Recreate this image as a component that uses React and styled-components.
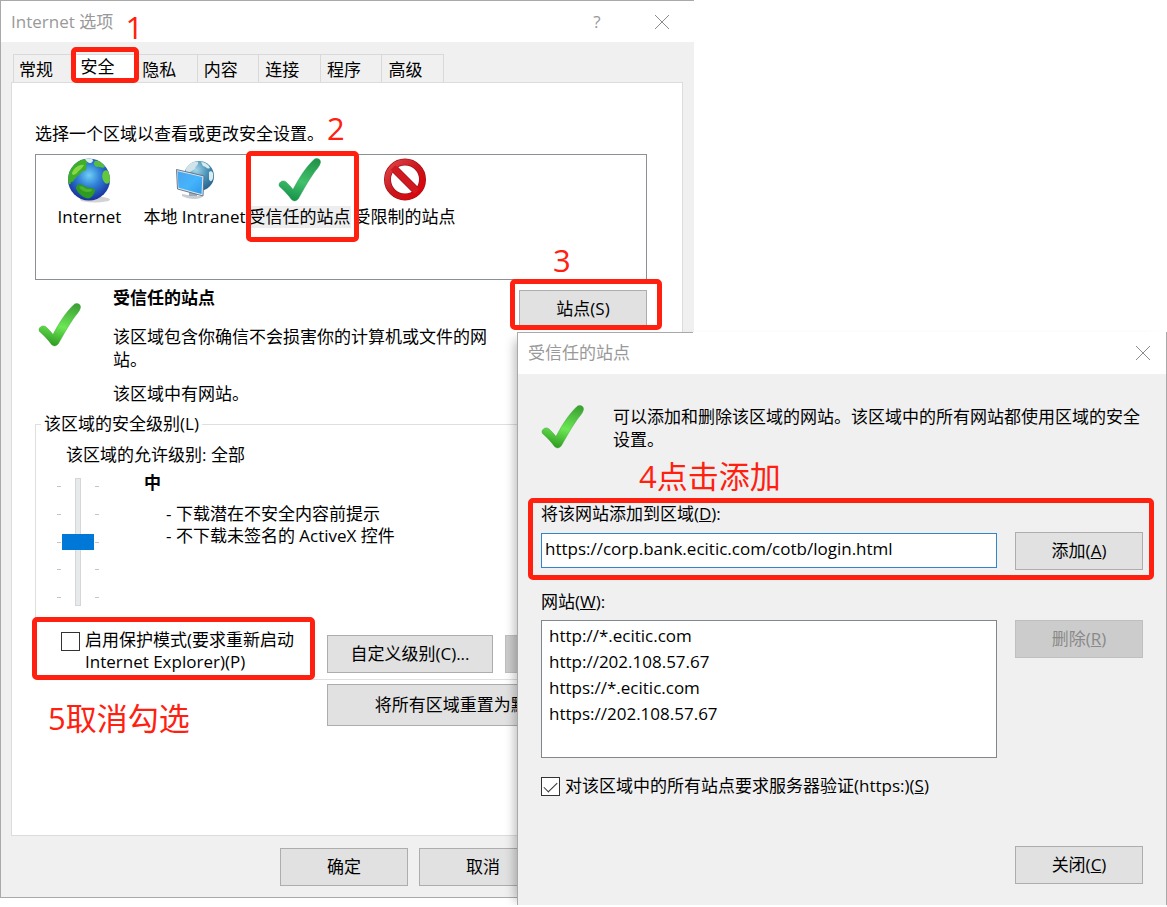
import { useState } from 'react';
import styled, { createGlobalStyle, css } from 'styled-components';

const GlobalStyle = createGlobalStyle`
    * {
        box-sizing: border-box;
    }
    body {
        margin: 0;
        background: #fff;
        color: #000;
        font: 17px/22px "Open Sans", "Noto Sans CJK SC", sans-serif;
    }
    button, input, select {
        font: inherit;
        color: inherit;
        margin: 0;
    }
    p, h2, h3, ul {
        margin: 0;
        padding: 0;
        font: inherit;
    }
`;

/* the two windows share the middle column, the dialog lies on top */
const Desktop = styled.main`
    display: grid;
    grid-template-columns: 517fr 177fr 473fr;
    grid-template-rows: 332px auto;
    align-items: start;
`;

const OptionsWindow = styled.section`
    grid-column: 1 / 3;
    grid-row: 1 / 3;
    background: #f0f0f0;
    border: solid #a9a9a9;
    border-width: 1px 0 1px 1px;
`;

const SitesDialog = styled.section`
    grid-column: 2 / 4;
    grid-row: 2;
    position: relative;
    background: #f0f0f0;
    border: solid #a9a9a9;
    border-width: 0 1px 0 1px;
    box-shadow: -8px 2px 10px -6px rgba(0, 0, 0, 0.28);
`;

const TitleBar = styled.header`
    display: flex;
    align-items: center;
    height: ${props => props.$height}px;
    padding: 0 ${props => props.$end}px 0 10px;
    color: #999;
    background: #fff;
    ${props => props.$edge && css`
        background: linear-gradient(#a9a9a9, #a9a9a9) 0 0 / 27% 1px no-repeat #fff;
    `}
`;

const Title = styled.h2`
    flex: 1;
`;

const CaptionButton = styled.button`
    display: flex;
    align-items: center;
    justify-content: center;
    width: 32px;
    height: 32px;
    margin-left: ${props => props.$gap || 0}px;
    padding: 0;
    border: 0;
    background: none;
`;

const Tabs = styled.div`
    display: flex;
    width: 431px;
    margin: 12px 0 0 12px;
`;

const TabSlot = styled.div`
    position: relative;
    flex: 1;
`;

const Tab = styled.button`
    display: block;
    width: 100%;
    height: 28px;
    padding: 2px 0 0 6px;
    text-align: left;
    background: #f0f0f0;
    border: solid #d9d9d9;
    border-width: 1px 1px 0 0;

    ${TabSlot}:first-child & {
        border-left-width: 1px;
        padding-left: 5px;
    }
    &[aria-selected="true"] {
        position: relative;
        height: 29px;
        padding: 0 0 4px 6px;
        margin-bottom: -1px;
        background: #fff;
    }
`;

const Panel = styled.div`
    margin: 0 11px 0 10px;
    padding: 40px 35px 109px 23px;
    background: #fff;
    border: 1px solid #dcdcdc;
`;

const Anchor = styled.div`
    position: relative;
`;

/* red frame drawn round its parent */
const Frame = styled.span`
    position: absolute;
    z-index: 2;
    inset: ${props => props.$inset};
    border: 5px solid #ff2010;
    border-radius: 5px;
    pointer-events: none;
`;

const Note = styled.span`
    position: absolute;
    z-index: 2;
    left: ${props => props.$left}px;
    top: ${props => props.$top}px;
    color: #ff2010;
    font-size: 31px;
    line-height: 40px;
    white-space: nowrap;
    pointer-events: none;
`;

const ZoneList = styled.div`
    display: flex;
    height: 126px;
    margin-top: 9px;
    padding: 0 1px;
    border: 1px solid #8b9097;
`;

const Zone = styled.button`
    position: relative;
    display: flex;
    flex-direction: column;
    align-items: center;
    width: 105px;
    height: 80px;
    padding: 3px 0 0;
    gap: 2px;
    border: 0;
    background: none;
    white-space: nowrap;
`;

const ZoneLabel = styled.span`
    background: ${props => (props.$selected ? '#eee' : 'none')};
`;

const Details = styled.div`
    display: flex;
    margin-top: 7px;
`;

const DetailsIcon = styled.div`
    padding: 16px 0 0 3px;
    width: 78px;
`;

const DetailsText = styled.div`
    flex: 1;
    padding-right: 20px;
    line-height: 23px;
`;

const DetailsTitle = styled.h3`
    font-weight: 700;
    line-height: 22px;
    margin-bottom: 16px;
`;

const DetailsNote = styled.p`
    margin-top: 11px;
`;

const PushButton = styled.button`
    width: ${props => props.$width || '128px'};
    height: ${props => (props.$tall ? 42 : 38)}px;
    padding: 0;
    background: #e1e1e1;
    border: 1px solid #adadad;
    white-space: nowrap;

    &:disabled {
        color: #8a8a8a;
        background: #ccc;
        border-color: #bfbfbf;
    }
`;

const SitesAnchor = styled(Anchor)`
    height: 38px;
    margin-top: 3px;
`;

const LevelGroup = styled.fieldset`
    min-width: 0;
    margin: 8px 0 0;
    padding: 9px 11px 6px 21px;
    border: 1px solid #dfdfdf;

    legend {
        margin-left: -16px;
        padding: 0 3px;
    }
`;

const Allowed = styled.p`
    padding-left: 9px;
`;

const LevelRow = styled.div`
    display: flex;
    margin-top: 6px;
`;

const SliderBox = styled.div`
    display: flex;
    gap: 1px;
    padding-top: 6px;
`;

const Ticks = styled.div`
    display: flex;
    flex-direction: column;
    justify-content: space-between;
    width: 4px;
    height: 128px;
    padding: 8px 0;

    i {
        height: 1px;
        background: #c4c4c4;
    }
`;

const Slider = styled.input`
    appearance: none;
    writing-mode: vertical-lr;
    direction: rtl;
    width: 32px;
    height: 128px;
    background: none;

    &::-webkit-slider-runnable-track {
        width: 6px;
        height: 128px;
        background: #e7eaea;
        border: 1px solid #d6d6d6;
    }
    &::-webkit-slider-thumb {
        appearance: none;
        width: 32px;
        height: 16px;
        margin-left: -14px;
        background: #0078d7;
    }
`;

const LevelText = styled.div`
    padding-left: 45px;
`;

const LevelName = styled.h3`
    font-weight: 700;
    margin-bottom: 9px;
`;

const LevelList = styled.ul`
    padding-left: 22px;
    list-style: none;
`;

const LevelControls = styled.div`
    display: grid;
    grid-template-columns: 254px 166px 1fr;
    column-gap: 12px;
    align-items: end;
    margin-top: 23px;
    margin-left: 4px;
`;

const CheckLabel = styled.label`
    display: flex;
    align-items: flex-start;
    gap: 5px;
    max-width: 100%;
`;

const CheckText = styled.span`
    max-width: ${props => props.$width || 'none'};
`;

const CheckBox = styled.input`
    appearance: none;
    flex: none;
    display: grid;
    place-items: start center;
    width: 19px;
    height: 19px;
    margin-top: ${props => props.$drop || 0}px;
    background: #fff;
    border: 1px solid #333;

    &:checked::after {
        content: "";
        width: 12px;
        height: 6px;
        margin-top: 4px;
        border: solid #333;
        border-width: 0 0 1px 1px;
        transform: rotate(-45deg);
    }
`;

const ResetRow = styled.div`
    position: relative;
    display: flex;
    justify-content: flex-end;
    margin-top: 4px;
`;

const Footer = styled.footer`
    display: flex;
    justify-content: flex-end;
    gap: 11px;
    padding: 12px 8px 11px;
`;

const DialogBody = styled.div`
    padding: 31px 23px 21px;
`;

const Intro = styled.div`
    position: relative;
    display: flex;
    gap: 28px;
    line-height: 23px;

    p {
        flex: 1;
    }
    svg {
        flex: none;
    }
`;

const FieldBlock = styled.div`
    position: relative;
    display: grid;
    grid-template-columns: 1fr 128px;
    column-gap: 18px;
    row-gap: 7px;
    align-items: start;
    margin-top: ${props => props.$top}px;

    label {
        grid-column: 1 / 3;
    }
`;

const UrlInput = styled.input`
    width: 100%;
    min-width: 0;
    height: 35px;
    margin-top: 1px;
    padding: 0 3px 5px;
    background: #fff;
    border: 1px solid #2f86cc;
    border-radius: 0;
    outline: 0;
`;

const SiteList = styled.select`
    width: 100%;
    height: 138px;
    padding: 2px 0;
    background: #fff;
    border: 1px solid #82878f;
    border-radius: 0;
    overflow: hidden;
    outline: 0;

    option {
        min-height: 26px;
        padding: 1px 7px 2px;
        line-height: 22px;
    }
`;

const VerifyRow = styled(CheckLabel)`
    margin-top: 17px;
`;

const DialogFooter = styled.div`
    display: flex;
    justify-content: flex-end;
    margin-top: 49px;
`;

const CloseIcon = () => (
    <svg width="16" height="16" viewBox="0 0 16 16" fill="none" stroke="#8c8c8c">
        <path d="M1 1l14 14M15 1L1 15" />
    </svg>
);

const CheckIcon = ({ id, from, mid, to }) => (
    <svg width="44" height="46" viewBox="0 0 44 46">
        <defs>
            <linearGradient id={id} x1="0.7" y1="0" x2="0.4" y2="1">
                <stop offset="0" stopColor={from} />
                <stop offset="0.55" stopColor={mid} />
                <stop offset="1" stopColor={to} />
            </linearGradient>
        </defs>
        <path
            d="M1.5 28.5C-.5 25 4 21.500 7.500 23.500C10.500 26 13 29 15 31.500C21 20 28 9 36 1.500C38 -.5 43 .5 42.500 4.500C41.500 9 38.500 11 35.500 15.500C29.500 24 24.500 33.500 20.500 40.500C18.500 43.500 15.500 43.500 13.500 41.500C10 36.500 6 32.500 1.500 28.500Z"
            fill={`url(#${id})`}
            stroke={to}
            strokeOpacity="0.5"
            strokeWidth="0.8"
        />
    </svg>
);

const GlobeIcon = () => (
    <svg width="44" height="46" viewBox="0 0 44 46">
        <defs>
            <radialGradient id="ocean" cx="0.5" cy="0.4" r="0.6">
                <stop offset="0" stopColor="#6fd0f5" />
                <stop offset="0.45" stopColor="#2f7fd6" />
                <stop offset="1" stopColor="#17309c" />
            </radialGradient>
            <clipPath id="globeClip"><circle cx="21" cy="21.5" r="21" /></clipPath>
        </defs>
        <ellipse cx="27" cy="41.500" rx="15" ry="3" fill="#b5b5b5" opacity="0.6" />
        <circle cx="21" cy="21.5" r="21" fill="url(#ocean)" />
        <g clipPath="url(#globeClip)">
            <path d="M0 24C-1 12 6 4 15 1C21 2 19 5 18 8C20 11 17 14 14 13C13 17 9 17 8 20C5 22 6 24 3 24C3 27 1 27 0 24Z" fill="#3fae2b" />
            <path d="M4 15C6 10 11 6 16 7C14 11 11 12 9 15C7 17 4 18 4 15Z" fill="#86d848" />
            <path d="M9 27C12 25 16 27 18 29C23 30 28 30 27 33C26 37 22 42 18 40C13 38 9 34 8 30Z" fill="#2f9a22" />
            <path d="M11 29C14 27 16 30 19 31C22 31 25 31 24 33C20 35 14 34 11 29Z" fill="#4fb32f" />
            <path d="M36 13C39 11 42 13 43 20C42 24 40 27 37 25C34 22 33 17 36 13Z" fill="#63c83c" />
            <path d="M27 3C31 2 35 5 37 9C34 11 32 8 29 9C26 8 25 5 27 3Z" fill="#57bd3a" />
            <path d="M17 1C20 -1 25 0 25 3C23 6 20 6 17 1Z" fill="#dff0e6" />
        </g>
    </svg>
);

const IntranetIcon = () => (
    <svg width="44" height="46" viewBox="0 0 44 46">
        <defs>
            <radialGradient id="sea" cx="0.4" cy="0.3" r="0.75">
                <stop offset="0" stopColor="#a5d5e8" />
                <stop offset="0.5" stopColor="#4a93b8" />
                <stop offset="1" stopColor="#235f8b" />
            </radialGradient>
            <linearGradient id="screen" x1="0" y1="0" x2="1" y2="1">
                <stop offset="0" stopColor="#4aa5f0" />
                <stop offset="0.55" stopColor="#45b4fb" />
                <stop offset="1" stopColor="#2f98ea" />
            </linearGradient>
        </defs>
        <circle cx="26" cy="18" r="15" fill="url(#sea)" />
        <path d="M13 11C16 5 21 3 25 4C26 7 22 8 22 11C18 13 15 16 12 16Z" fill="#cfe3e8" />
        <path d="M28 4C32 4 36 7 37 10C34 12 33 8 30 8ZM36 14C39 12 41 15 40 20C39 24 37 24 36 21Z" fill="#dcebee" />
        <path d="M9 36L20 38L30 38C28 42 16 42 9 38Z" fill="#c5ced5" />
        <path d="M16 33h8v5h-8z" fill="#9fabb5" />
        <path d="M3.500 11.500L31 18L30 38L4.500 31Z" fill="#dde6ee" stroke="#5c6d7e" strokeWidth="0.9" />
        <path d="M4.500 13.200L29.300 19L28.500 36L5.500 29.800Z" fill="url(#screen)" />
    </svg>
);

const BlockedIcon = () => (
    <svg width="44" height="46" viewBox="0 0 44 46">
        <defs>
            <linearGradient id="stop" x1="0" y1="0" x2="1" y2="1">
                <stop offset="0" stopColor="#e0454a" />
                <stop offset="0.5" stopColor="#c9161c" />
                <stop offset="1" stopColor="#e00008" />
            </linearGradient>
        </defs>
        <g fill="none">
            <circle cx="22" cy="21.500" r="17.500" stroke="#a01116" strokeWidth="7" />
            <path d="M10 9.500L34 33.500" stroke="#a01116" strokeWidth="8" />
            <circle cx="22" cy="21.500" r="17.500" stroke="url(#stop)" strokeWidth="5.500" />
            <path d="M10 9.500L34 33.500" stroke="#d01a20" strokeWidth="6.500" />
        </g>
    </svg>
);

const BrightCheck = ({ id }) => <CheckIcon id={id} from="#3da435" mid="#6be854" to="#2f9c22" />;

const tabNames = ['常规', '安全', '隐私', '内容', '连接', '程序', '高级'];

const zones = [
    { name: 'Internet', icon: <GlobeIcon /> },
    { name: '本地 Intranet', icon: <IntranetIcon /> },
    { name: '受信任的站点', icon: <CheckIcon id="zoneCheck" from="#22954a" mid="#43c06c" to="#17934a" />, marked: true },
    { name: '受限制的站点', icon: <BlockedIcon /> },
];

const sites = [
    'http://*.ecitic.com',
    'http://202.108.57.67',
    'https://*.ecitic.com',
    'https://202.108.57.67',
];

const TickColumn = () => (
    <Ticks><i /><i /><i /><i /><i /></Ticks>
);

const InternetOptions = () => {
    const [level, setLevel] = useState(2);
    const [isProtected, setProtected] = useState(false);

    return (
        <OptionsWindow>
            <TitleBar $height={41} $end={16}>
                <Title>Internet 选项</Title>
                <CaptionButton aria-label="帮助">?</CaptionButton>
                <CaptionButton $gap={33} aria-label="关闭"><CloseIcon /></CaptionButton>
            </TitleBar>
            <Tabs role="tablist">
                {tabNames.map(name => (
                    <TabSlot key={name}>
                        <Tab role="tab" aria-selected={name === '安全'}>{name}</Tab>
                        {name === '安全' && (
                            <>
                                <Frame $inset="-7px -3px -1px -4px" />
                                <Note $left={51} $top={-47}>1</Note>
                            </>
                        )}
                    </TabSlot>
                ))}
            </Tabs>
            <Panel>
                <Anchor>
                    <p>选择一个区域以查看或更改安全设置。</p>
                    <Note $left={292} $top={-15}>2</Note>
                </Anchor>
                <ZoneList>
                    {zones.map(zone => (
                        <Zone key={zone.name}>
                            {zone.icon}
                            <ZoneLabel $selected={zone.marked}>{zone.name}</ZoneLabel>
                            {zone.marked && <Frame $inset="-4px -7px -7px -1px" />}
                        </Zone>
                    ))}
                </ZoneList>
                <Details>
                    <DetailsIcon><BrightCheck id="detailCheck" /></DetailsIcon>
                    <DetailsText>
                        <DetailsTitle>受信任的站点</DetailsTitle>
                        <p>该区域包含你确信不会损害你的计算机或文件的网站。</p>
                        <DetailsNote>该区域中有网站。</DetailsNote>
                    </DetailsText>
                    <SitesAnchor>
                        <PushButton>站点(S)</PushButton>
                        <Frame $inset="-11px -15px -2px -9px" />
                        <Note $left={34} $top={-50}>3</Note>
                    </SitesAnchor>
                </Details>
                <LevelGroup>
                    <legend>该区域的安全级别(L)</legend>
                    <Allowed>该区域的允许级别: 全部</Allowed>
                    <LevelRow>
                        <SliderBox>
                            <TickColumn />
                            <Slider
                                type="range"
                                min="0"
                                max="4"
                                value={level}
                                aria-label="该区域的安全级别"
                                onChange={e => setLevel(Number(e.target.value))}
                            />
                            <TickColumn />
                        </SliderBox>
                        <LevelText>
                            <LevelName>中</LevelName>
                            <LevelList>
                                <li>- 下载潜在不安全内容前提示</li>
                                <li>- 不下载未签名的 ActiveX 控件</li>
                            </LevelList>
                        </LevelText>
                    </LevelRow>
                    <LevelControls>
                        <Anchor>
                            <CheckLabel>
                                <CheckBox
                                    type="checkbox"
                                    $drop={3}
                                    checked={isProtected}
                                    onChange={e => setProtected(e.target.checked)}
                                />
                                <CheckText $width="220px">启用保护模式(要求重新启动 Internet Explorer)(P)</CheckText>
                            </CheckLabel>
                            <Frame $inset="-12px 0 -7px -29px" />
                        </Anchor>
                        <PushButton $width="100%">自定义级别(C)...</PushButton>
                        <PushButton $width="100%" disabled>默认级别(D)</PushButton>
                    </LevelControls>
                </LevelGroup>
                <ResetRow>
                    <Note $left={13} $top={14}>5取消勾选</Note>
                    <PushButton $width="320px" $tall>将所有区域重置为默认级别(R)</PushButton>
                </ResetRow>
            </Panel>
            <Footer>
                <PushButton>确定</PushButton>
                <PushButton>取消</PushButton>
                <PushButton disabled>应用(A)</PushButton>
            </Footer>
        </OptionsWindow>
    );
};

const TrustedSites = () => {
    const [url, setUrl] = useState('https://corp.bank.ecitic.com/cotb/login.html');
    const [verify, setVerify] = useState(true);

    return (
        <SitesDialog>
            <TitleBar $height={42} $end={7} $edge>
                <Title>受信任的站点</Title>
                <CaptionButton aria-label="关闭"><CloseIcon /></CaptionButton>
            </TitleBar>
            <DialogBody>
                <Intro>
                    <BrightCheck id="dialogCheck" />
                    <p>可以添加和删除该区域的网站。该区域中的所有网站都使用区域的安全设置。</p>
                    <Note $left={98} $top={51}>4点击添加</Note>
                </Intro>
                <FieldBlock $top={52}>
                    <label htmlFor="site-url">将该网站添加到区域(<u>D</u>):</label>
                    <UrlInput id="site-url" type="text" value={url} onChange={e => setUrl(e.target.value)} />
                    <PushButton>添加(<u>A</u>)</PushButton>
                    <Frame $inset="-5px -11px -10px -13px" />
                </FieldBlock>
                <FieldBlock $top={21}>
                    <label htmlFor="site-list">网站(<u>W</u>):</label>
                    <SiteList id="site-list" multiple size="5">
                        {sites.map(site => <option key={site}>{site}</option>)}
                    </SiteList>
                    <PushButton disabled>删除(<u>R</u>)</PushButton>
                </FieldBlock>
                <VerifyRow>
                    <CheckBox
                        type="checkbox"
                        $drop={2}
                        checked={verify}
                        onChange={e => setVerify(e.target.checked)}
                    />
                    <CheckText>对该区域中的所有站点要求服务器验证(https:)(<u>S</u>)</CheckText>
                </VerifyRow>
                <DialogFooter>
                    <PushButton>关闭(<u>C</u>)</PushButton>
                </DialogFooter>
            </DialogBody>
        </SitesDialog>
    );
};

const App = () => {
    return (
        <>
            <GlobalStyle />
            <Desktop>
                <InternetOptions />
                <TrustedSites />
            </Desktop>
        </>
    );
};

export default App;
